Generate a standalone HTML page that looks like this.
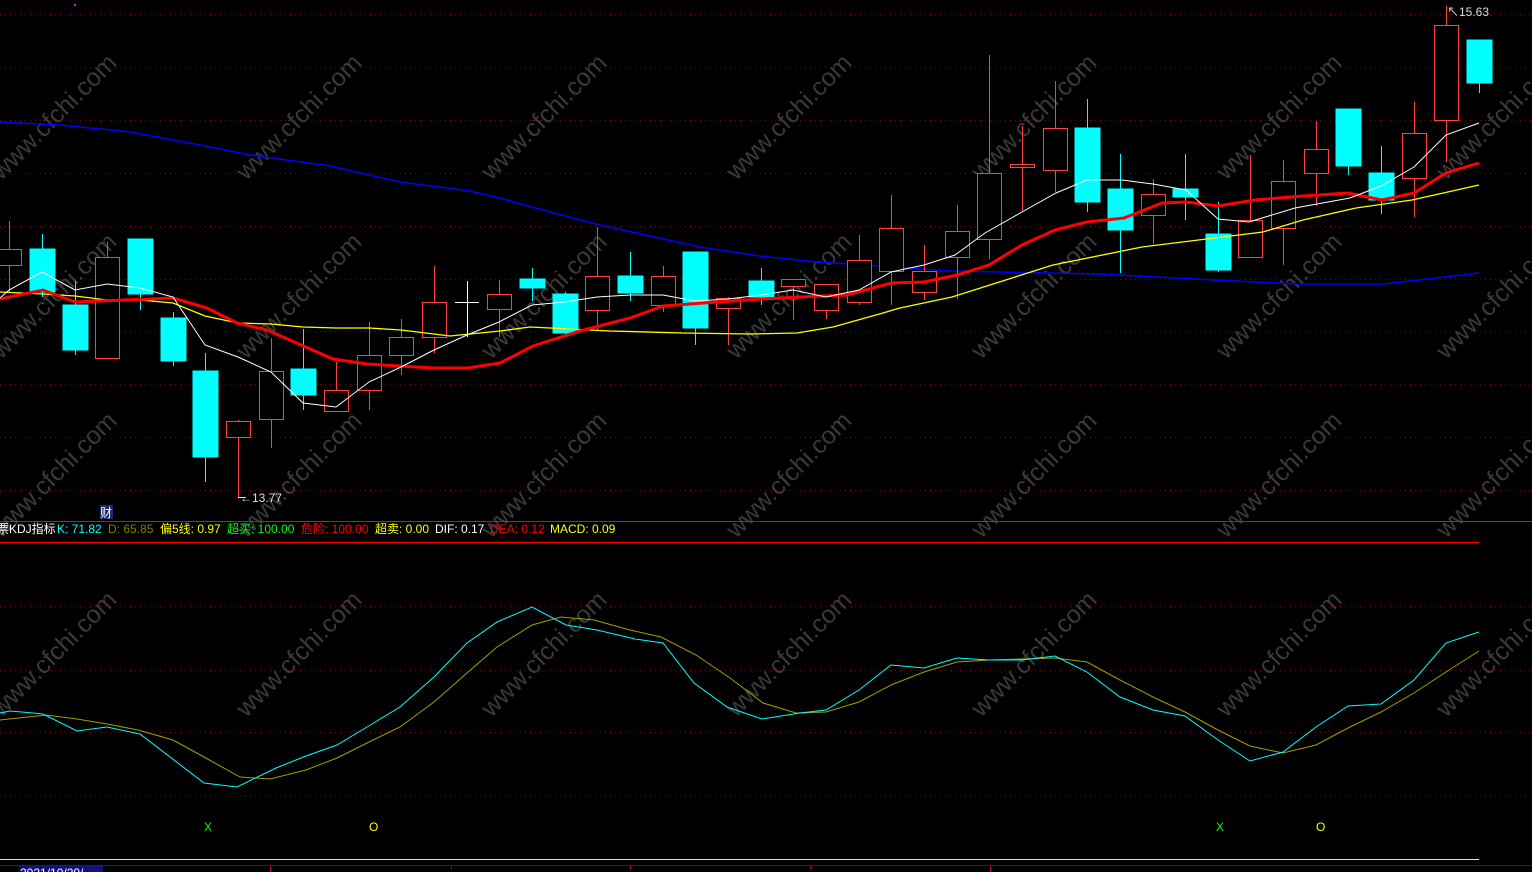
<!DOCTYPE html>
<html><head><meta charset="utf-8"><style>
html,body{margin:0;padding:0;background:#000;width:1532px;height:872px;overflow:hidden}
svg{position:absolute;left:0;top:0}
.t{font-family:"Liberation Sans","Noto Sans CJK SC",sans-serif;font-size:12px}
.wm{font-family:"Liberation Sans",sans-serif;font-size:25px;fill:#3a3a3a}
</style></head><body>
<svg width="1532" height="872" viewBox="0 0 1532 872" shape-rendering="crispEdges">
<!-- grid -->
<g stroke="#800000" stroke-dasharray="1,4" stroke-width="1">
<line x1="0" y1="14.5" x2="1532" y2="14.5"/><line x1="0" y1="67.5" x2="1532" y2="67.5"/>
<line x1="0" y1="120.5" x2="1532" y2="120.5"/><line x1="0" y1="173.5" x2="1532" y2="173.5"/>
<line x1="0" y1="226.5" x2="1532" y2="226.5"/><line x1="0" y1="279.5" x2="1532" y2="279.5"/>
<line x1="0" y1="331.5" x2="1532" y2="331.5"/><line x1="0" y1="384.5" x2="1532" y2="384.5"/>
<line x1="0" y1="437.5" x2="1532" y2="437.5"/><line x1="0" y1="490.5" x2="1532" y2="490.5"/>
<line x1="0" y1="606.5" x2="1532" y2="606.5"/><line x1="0" y1="670.5" x2="1532" y2="670.5"/>
<line x1="0" y1="732.5" x2="1532" y2="732.5"/><line x1="0" y1="795.5" x2="1532" y2="795.5"/>
</g>
<!-- watermarks -->
<g class="wm">
<text transform="translate(55,118) rotate(-45)" text-anchor="middle" dominant-baseline="middle">www.cfchi.com</text>
<text transform="translate(300,118) rotate(-45)" text-anchor="middle" dominant-baseline="middle">www.cfchi.com</text>
<text transform="translate(545,118) rotate(-45)" text-anchor="middle" dominant-baseline="middle">www.cfchi.com</text>
<text transform="translate(790,118) rotate(-45)" text-anchor="middle" dominant-baseline="middle">www.cfchi.com</text>
<text transform="translate(1035,118) rotate(-45)" text-anchor="middle" dominant-baseline="middle">www.cfchi.com</text>
<text transform="translate(1280,118) rotate(-45)" text-anchor="middle" dominant-baseline="middle">www.cfchi.com</text>
<text transform="translate(1500,118) rotate(-45)" text-anchor="middle" dominant-baseline="middle">www.cfchi.com</text>
<text transform="translate(55,297) rotate(-45)" text-anchor="middle" dominant-baseline="middle">www.cfchi.com</text>
<text transform="translate(300,297) rotate(-45)" text-anchor="middle" dominant-baseline="middle">www.cfchi.com</text>
<text transform="translate(545,297) rotate(-45)" text-anchor="middle" dominant-baseline="middle">www.cfchi.com</text>
<text transform="translate(790,297) rotate(-45)" text-anchor="middle" dominant-baseline="middle">www.cfchi.com</text>
<text transform="translate(1035,297) rotate(-45)" text-anchor="middle" dominant-baseline="middle">www.cfchi.com</text>
<text transform="translate(1280,297) rotate(-45)" text-anchor="middle" dominant-baseline="middle">www.cfchi.com</text>
<text transform="translate(1500,297) rotate(-45)" text-anchor="middle" dominant-baseline="middle">www.cfchi.com</text>
<text transform="translate(55,476) rotate(-45)" text-anchor="middle" dominant-baseline="middle">www.cfchi.com</text>
<text transform="translate(300,476) rotate(-45)" text-anchor="middle" dominant-baseline="middle">www.cfchi.com</text>
<text transform="translate(545,476) rotate(-45)" text-anchor="middle" dominant-baseline="middle">www.cfchi.com</text>
<text transform="translate(790,476) rotate(-45)" text-anchor="middle" dominant-baseline="middle">www.cfchi.com</text>
<text transform="translate(1035,476) rotate(-45)" text-anchor="middle" dominant-baseline="middle">www.cfchi.com</text>
<text transform="translate(1280,476) rotate(-45)" text-anchor="middle" dominant-baseline="middle">www.cfchi.com</text>
<text transform="translate(1500,476) rotate(-45)" text-anchor="middle" dominant-baseline="middle">www.cfchi.com</text>
<text transform="translate(55,655) rotate(-45)" text-anchor="middle" dominant-baseline="middle">www.cfchi.com</text>
<text transform="translate(300,655) rotate(-45)" text-anchor="middle" dominant-baseline="middle">www.cfchi.com</text>
<text transform="translate(545,655) rotate(-45)" text-anchor="middle" dominant-baseline="middle">www.cfchi.com</text>
<text transform="translate(790,655) rotate(-45)" text-anchor="middle" dominant-baseline="middle">www.cfchi.com</text>
<text transform="translate(1035,655) rotate(-45)" text-anchor="middle" dominant-baseline="middle">www.cfchi.com</text>
<text transform="translate(1280,655) rotate(-45)" text-anchor="middle" dominant-baseline="middle">www.cfchi.com</text>
<text transform="translate(1500,655) rotate(-45)" text-anchor="middle" dominant-baseline="middle">www.cfchi.com</text>
</g>
<!-- blue MA60 -->
<polyline fill="none" stroke="#0000ff" stroke-width="1.5" shape-rendering="auto" points="0,122 60,125 130,132 200,145 250,155 330,166 400,182 470,191 507,200 550,212 600,225 650,236 700,247 760,256 817,262 880,266 950,271 1100,274 1214,280 1300,284 1384,284 1479,273"/>
<!-- candles -->
<g stroke="#ff4040" fill="#000" stroke-width="1">
<line x1="9.5" y1="221" x2="9.5" y2="292"/><rect x="-2.5" y="249.5" width="24" height="16"/>
<line x1="107.5" y1="242" x2="107.5" y2="358"/><rect x="95.5" y="257.5" width="24" height="101"/>
<line x1="238.5" y1="420" x2="238.5" y2="498"/><rect x="226.5" y="421.5" width="24" height="16"/>
<line x1="271.5" y1="338" x2="271.5" y2="448"/><rect x="259.5" y="371.5" width="24" height="48"/>
<line x1="336.5" y1="362" x2="336.5" y2="411"/><rect x="324.5" y="390.5" width="24" height="21"/>
<line x1="369.5" y1="322" x2="369.5" y2="410"/><rect x="357.5" y="355.5" width="24" height="35"/>
<line x1="401.5" y1="319" x2="401.5" y2="375"/><rect x="389.5" y="337.5" width="24" height="18"/>
<line x1="434.5" y1="266" x2="434.5" y2="353"/><rect x="422.5" y="302.5" width="24" height="35"/>
<line x1="499.5" y1="280" x2="499.5" y2="337"/><rect x="487.5" y="294.5" width="24" height="15"/>
<line x1="597.5" y1="227" x2="597.5" y2="330"/><rect x="585.5" y="276.5" width="24" height="34"/>
<line x1="663.5" y1="266" x2="663.5" y2="312"/><rect x="651.5" y="276.5" width="24" height="29"/>
<line x1="728.5" y1="297" x2="728.5" y2="345"/><rect x="716.5" y="298.5" width="24" height="10"/>
<line x1="793.5" y1="279" x2="793.5" y2="320"/><rect x="781.5" y="279.5" width="24" height="7"/>
<line x1="826.5" y1="284" x2="826.5" y2="319"/><rect x="814.5" y="284.5" width="24" height="26"/>
<line x1="859.5" y1="235" x2="859.5" y2="305"/><rect x="847.5" y="260.5" width="24" height="42"/>
<line x1="891.5" y1="195" x2="891.5" y2="305"/><rect x="879.5" y="228.5" width="24" height="43"/>
<line x1="924.5" y1="245" x2="924.5" y2="300"/><rect x="912.5" y="271.5" width="24" height="21"/>
<line x1="957.5" y1="205" x2="957.5" y2="299"/><rect x="945.5" y="231.5" width="24" height="26"/>
<line x1="989.5" y1="55" x2="989.5" y2="259"/><rect x="977.5" y="173.5" width="24" height="66"/>
<line x1="1022.5" y1="126" x2="1022.5" y2="212"/><rect x="1010.5" y="164.5" width="24" height="3"/>
<line x1="1055.5" y1="81" x2="1055.5" y2="192"/><rect x="1043.5" y="128.5" width="24" height="42"/>
<line x1="1153.5" y1="179" x2="1153.5" y2="244"/><rect x="1141.5" y="194.5" width="24" height="21"/>
<line x1="1250.5" y1="155" x2="1250.5" y2="257"/><rect x="1238.5" y="220.5" width="24" height="37"/>
<line x1="1283.5" y1="160" x2="1283.5" y2="265"/><rect x="1271.5" y="181.5" width="24" height="47"/>
<line x1="1316.5" y1="121" x2="1316.5" y2="206"/><rect x="1304.5" y="149.5" width="24" height="24"/>
<line x1="1414.5" y1="102" x2="1414.5" y2="217"/><rect x="1402.5" y="133.5" width="24" height="45"/>
<line x1="1446.5" y1="6" x2="1446.5" y2="162"/><rect x="1434.5" y="25.5" width="24" height="95"/>
</g>
<g stroke="#00ffff" fill="#00ffff" stroke-width="1">
<line x1="42.5" y1="234" x2="42.5" y2="297"/><rect x="30" y="249" width="25" height="43"/>
<line x1="75.5" y1="281" x2="75.5" y2="355"/><rect x="63" y="305" width="25" height="45"/>
<line x1="140.5" y1="239" x2="140.5" y2="310"/><rect x="128" y="239" width="25" height="55"/>
<line x1="173.5" y1="312" x2="173.5" y2="366"/><rect x="161" y="318" width="25" height="43"/>
<line x1="205.5" y1="353" x2="205.5" y2="482"/><rect x="193" y="371" width="25" height="86"/>
<line x1="303.5" y1="329" x2="303.5" y2="410"/><rect x="291" y="369" width="25" height="26"/>
<line x1="532.5" y1="268" x2="532.5" y2="301"/><rect x="520" y="279" width="25" height="9"/>
<line x1="565.5" y1="292" x2="565.5" y2="335"/><rect x="553" y="294" width="25" height="39"/>
<line x1="630.5" y1="252" x2="630.5" y2="301"/><rect x="618" y="276" width="25" height="17"/>
<line x1="695.5" y1="252" x2="695.5" y2="345"/><rect x="683" y="252" width="25" height="76"/>
<line x1="761.5" y1="268" x2="761.5" y2="305"/><rect x="749" y="281" width="25" height="16"/>
<line x1="1087.5" y1="99" x2="1087.5" y2="212"/><rect x="1075" y="128" width="25" height="74"/>
<line x1="1120.5" y1="154" x2="1120.5" y2="273"/><rect x="1108" y="189" width="25" height="41"/>
<line x1="1185.5" y1="154" x2="1185.5" y2="220"/><rect x="1173" y="189" width="25" height="8"/>
<line x1="1218.5" y1="202" x2="1218.5" y2="272"/><rect x="1206" y="234" width="25" height="36"/>
<line x1="1348.5" y1="109" x2="1348.5" y2="175"/><rect x="1336" y="109" width="25" height="57"/>
<line x1="1381.5" y1="146" x2="1381.5" y2="214"/><rect x="1369" y="173" width="25" height="27"/>
<line x1="1479.5" y1="40" x2="1479.5" y2="93"/><rect x="1467" y="40" width="25" height="43"/>
</g>
<g stroke="#fff"><line x1="467.5" y1="281" x2="467.5" y2="337"/><line x1="455" y1="302.5" x2="479" y2="302.5"/></g>
<!-- MAs -->
<g fill="none" shape-rendering="auto">
<polyline stroke="#ffff00" stroke-width="1.3" points="0,292 43,294 75,296 107,300 140,300 173,303 205,316 238,323 271,324 303,327 336,328 369,328 401,330 450,336 500,331 530,327 610,331 683,333 750,334 797,333 833,327 883,313 900,308 952,297 1053,265 1142,247 1263,232 1303,220 1356,208 1412,200 1479,185"/>
<polyline stroke="#ff0000" stroke-width="3" points="0,299 43,290 75,302 150,299 173,298 207,308 237,323 267,330 333,359 367,364 433,368 467,368 500,363 533,346 580,331 630,318 663,306 717,302 761,299 800,297 847,295 891,283 924,282 957,275 989,265 1022,245 1055,230 1087,222 1124,218 1162,203 1186,202 1218,206 1255,200 1303,196 1348,193 1382,200 1414,193 1446,173 1479,163"/>
<polyline stroke="#ffffff" stroke-width="1" points="0,298 9,290 42,272 75,290 107,284 140,288 173,297 205,345 238,357 271,372 303,403 336,407 369,382 401,367 434,350 467,335 499,322 532,305 565,302 597,297 630,295 663,295 695,301 728,299 761,295 793,290 826,297 859,290 891,272 924,265 955,255 985,233 1022,212 1056,193 1087,180 1122,180 1153,184 1186,190 1218,219 1249,222 1295,208 1350,198 1381,186 1414,167 1446,135 1479,123"/>
</g>
<!-- price labels -->
<text class="t" x="240" y="502" fill="#ddd">←13.77</text>
<line x1="238" y1="497.5" x2="246" y2="497.5" stroke="#ddd"/>
<text class="t" x="1447" y="16" fill="#ddd">↖15.63</text>
<rect x="74" y="4" width="2" height="2" fill="#ff00ff"/>
<rect x="100" y="505" width="13" height="14" fill="#1a2a6a"/>
<text class="t" x="100" y="517" fill="#fff">财</text>
<!-- separators -->
<line x1="0" y1="521.5" x2="1532" y2="521.5" stroke="#ff0000"/>
<line x1="0" y1="542.5" x2="1479" y2="542.5" stroke="#ff0000"/>
<text class="t" y="533" x="-3"><tspan fill="#fff">票KDJ指标</tspan><tspan x="57" fill="#00ffff">K: 71.82</tspan><tspan x="108" fill="#808000">D: 65.85</tspan><tspan x="160" fill="#ffff00">偏5线: 0.97</tspan><tspan x="227" fill="#00ff00">超买: 100.00</tspan><tspan x="301" fill="#ff0000">危险: 100.00</tspan><tspan x="375" fill="#ffff00">超卖: 0.00</tspan><tspan x="435" fill="#fff">DIF: 0.17</tspan><tspan x="490" fill="#ff0000">DEA: 0.12</tspan><tspan x="550" fill="#ffff00">MACD: 0.09</tspan></text>
<!-- KDJ -->
<g fill="none" shape-rendering="auto" stroke-width="1">
<polyline stroke="#a0a000" points="0,720 46,715 77,719 107,724 138,730 173,740 204,757 240,777 270,779 306,770 337,758 367,743 400,727 434,702 467,673 497,647 532,625 561,617 594,620 630,630 661,637 696,655 730,678 763,703 796,713 826,712 859,702 891,685 924,672 957,662 989,660 1022,659 1055,658 1087,662 1120,680 1153,697 1185,712 1218,730 1250,746 1283,753 1316,745 1348,728 1381,712 1414,693 1446,672 1479,651"/>
<polyline stroke="#00ffff" points="0,713 10,711 33,713 43,714 77,731 107,727 140,734 204,783 237,787 276,768 306,756 337,745 367,727 400,707 434,677 467,643 497,622 532,607 566,625 597,630 635,639 663,643 694,683 727,707 762,719 800,713 826,710 859,690 891,665 924,668 957,658 989,660 1022,660 1055,656 1087,672 1120,697 1153,710 1185,716 1218,740 1250,761 1283,752 1316,727 1348,706 1381,704 1414,680 1446,643 1479,632"/>
</g>
<text class="t" x="204" y="831" fill="#00ff00">X</text>
<text class="t" x="369" y="831" fill="#ffff00">O</text>
<text class="t" x="1216" y="831" fill="#00ff00">X</text>
<text class="t" x="1316" y="831" fill="#ffff00">O</text>
<!-- bottom -->
<line x1="0" y1="859.5" x2="1479" y2="859.5" stroke="#ffff00"/>
<line x1="0" y1="865.5" x2="1532" y2="865.5" stroke="#800000"/>
<g stroke="#cc0000"><line x1="270.5" y1="866" x2="270.5" y2="872"/><line x1="451.5" y1="866" x2="451.5" y2="869"/><line x1="630.5" y1="866" x2="630.5" y2="869"/><line x1="810.5" y1="866" x2="810.5" y2="869"/><line x1="990.5" y1="866" x2="990.5" y2="872"/></g>
<rect x="19" y="866" width="84" height="6" fill="#101080"/>
<text x="20" y="877" fill="#fff" style="font-family:'Liberation Sans',sans-serif;font-size:12px">2021/10/20/</text>
</svg>
</body></html>
